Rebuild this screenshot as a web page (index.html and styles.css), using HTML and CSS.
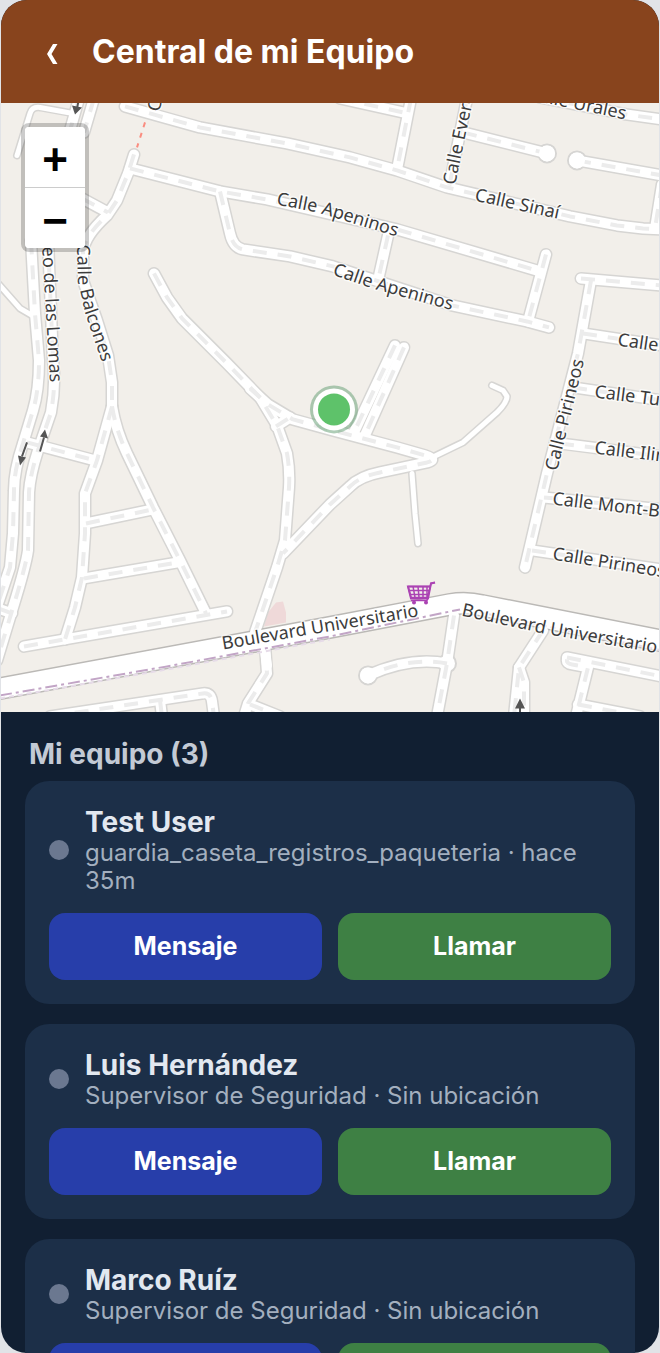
FILE: index.html
```html
<!DOCTYPE html>
<html lang="es">
<head>
  <meta charset="UTF-8" />
  <meta name="viewport" content="width=device-width, initial-scale=1.0" />
  <title>Central de mi Equipo</title>
  <link rel="stylesheet" href="styles.css">
</head>
<body>

  <div class="phone">
    <header class="topbar">
      <button class="back" type="button" aria-label="Volver">
        <svg width="12" height="22" viewBox="0 0 12 22"><path d="M7 1h4.500L5.500 11l6 10H7L1 11z" fill="#fff"/></svg>
      </button>
      <h1>Central de mi Equipo</h1>
    </header>

    <div class="map">
      <svg class="map-canvas" viewBox="1 102 658 610" preserveAspectRatio="xMidYMid slice">
        <defs>
          <!-- calles -->
          <g id="calles">
            <path d="M125 106L157 115 200 127 287 143 350 157 397 170 447 187 570 216 617 225 643 228 662 229"/>
            <path d="M411 98L397 169"/>
            <path d="M340 98L403 112"/>
            <path d="M467 98L449 187"/>
            <path d="M463 132L547 153"/>
            <path d="M577 160L662 175"/>
            <path d="M662 184L655 228"/>
            <path d="M540 97L626 114 662 119"/>
            <path d="M130 168L220 191 267 199 397 229 540 271"/>
            <path d="M220 191L230 233Q233 247 243 249L290 256 333 266 452 305 527 321 549 327"/>
            <path d="M388 235L378 280"/>
            <path d="M546 254L528 321"/>
            <path d="M134 154L128 173 117 200 107 215Q84 236 83 252L83 280 97 320 108 355 112 382V408"/>
            <path d="M82 198L108 212"/>
            <path d="M112 406L97 460 85 493V533L82 577 75 607 65 639"/>
            <path d="M112 406Q116 430 127 453L153 507 180 560 206 613"/>
            <path d="M86 523L153 509"/>
            <path d="M84 578L178 562"/>
            <path d="M24 646L227 611"/>
            <path d="M94 98L84 132"/>
            <path d="M79 98L70 130"/>
            <path d="M31 240L35 313 39 360Q39 390 33 410L23 443Q14 470 14 490L13 533 10 567 -2 603"/>
            <path d="M48 240L53 360Q56 385 51 412L38 450Q30 475 29 492L28 550Q26 565 13 607L-3 660"/>
            <path d="M-2 608L12 613"/>
            <path d="M27 442L95 460"/>
            <path d="M154 273L167 297 182 318 227 363 260 397 277 425 287 453Q290 470 289 487L285 540 277 567 255 632"/>
            <path d="M250 388L268 404 293 419 333 430 397 447 425 455Q438 459 427 462L380 472Q360 476 350 486L330 504 283 553"/>
            <path d="M276 426L290 417"/>
            <path d="M395 345L353 434"/>
            <path d="M404 347L364 437"/>
            <path d="M581 278L662 285"/>
            <path d="M591 280L578 353 547 473 525 567"/>
            <path d="M583 333L662 345"/>
            <path d="M573 387L662 400"/>
            <path d="M560 443L662 456"/>
            <path d="M544 497L662 509"/>
            <path d="M532 550L662 569"/>
            <path d="M265 645L267 673 248 703 244 716"/>
            <path d="M250 704L280 716"/>
            <path d="M50 716L203 693Q211 692 212 701L214 716"/>
            <path d="M160 700L162 716"/>
            <path d="M454 615L447 663 437 716"/>
            <path d="M447 663Q410 656 368 675"/>
            <path d="M543 630L519 667 514 716"/>
            <path d="M519 667L524 682V716"/>
            <path d="M567 657L662 676"/>
            <path d="M567 659Q566 663 572 664L588 667 576 716"/>
            <path d="M578 704L640 716"/>
          </g>
          <g id="servicio">
            <path d="M17 155L30 113Q32 106 40 107L73 113"/>
            <path d="M-2 283L20 308 32 315"/>
            <path d="M432 457L463 442 497 412Q507 402 507 396L503 390 492 385"/>
            <path d="M412 473L415 513 418 543"/>
          </g>
          <g id="glorietas">
            <circle cx="547" cy="153" r="8"/>
            <circle cx="577" cy="160" r="8"/>
            <circle cx="447" cy="663" r="8"/>
            <circle cx="368" cy="675" r="8"/>
          </g>
          <path id="bulevar" d="M-10 690L330 627 450 604Q466 601 482 605L670 642"/>

          <!-- lineas base de los nombres -->
          <path id="n-apeninos1" d="M276 204L317 212 400 237"/>
          <path id="n-apeninos2" d="M332 274L372 288 460 312"/>
          <path id="n-sinai" d="M474 200L570 221"/>
          <path id="n-everest" d="M455 185L480 66"/>
          <path id="n-urales" d="M510 95L625 119"/>
          <path id="n-balcones" d="M77 244L78 280 85 312 108 380"/>
          <path id="n-lomas" d="M38 200L43 260 50 382"/>
          <path id="n-pirineos" d="M557 471L587 348"/>
          <path id="n-calle" d="M617 345L720 360"/>
          <path id="n-tu" d="M594 397L720 413"/>
          <path id="n-ilimani" d="M594 453L720 468"/>
          <path id="n-mont" d="M552 504L720 524"/>
          <path id="n-pirineos2" d="M552 559L720 586"/>
          <path id="n-bulevar1" d="M223 649L305 635 430 614"/>
          <path id="n-bulevar2" d="M461 615L543 633 670 655"/>
        </defs>

        <rect class="land" x="-200" y="-200" width="1100" height="1300"/>
        <path d="M264 626L268 612 276 602 283 601 286 612 286 622z" fill="#efd9d9"/>

        <use href="#servicio" class="casing thin"/>
        <use href="#calles" class="casing"/>
        <use href="#glorietas" class="casing-dot"/>
        <use href="#bulevar" class="casing wide"/>
        <use href="#servicio" class="fill thin"/>
        <use href="#glorietas" class="fill-dot"/>
        <use href="#calles" class="fill"/>
        <use href="#calles" class="dash"/>
        <use href="#bulevar" class="fill wide"/>
        <circle cx="547" cy="153" r="8" fill="#fff"/>
        <circle cx="577" cy="160" r="8" fill="#fff"/>
        <circle cx="368" cy="675" r="8" fill="#fff"/>
        <path class="fill" d="M263 635L267 665"/>
        <path class="limit" d="M0 695L167 666 330 636 460 609"/>
        <path class="limit-soft" d="M0 698L167 669 330 639 M480 612L662 650"/>
        <path class="steps" d="M145 122L137 147"/>

        <g class="arrows">
          <path d="M79 98L77 108M27 442L22 456M40 451L44 437M520 716V706"/>
          <path class="head" d="M72 105L82 107 75 114zM18 455L26 457 20 465zM40 436L48 438 45 429zM515 708L525 708 520 698z"/>
        </g>

        <g class="names">
          <text><textPath href="#n-apeninos1">Calle Apeninos</textPath></text>
          <text><textPath href="#n-apeninos2">Calle Apeninos</textPath></text>
          <text><textPath href="#n-sinai">Calle Sinaí</textPath></text>
          <text><textPath href="#n-everest">Calle Everest</textPath></text>
          <text text-anchor="end"><textPath href="#n-urales" startOffset="100%">Calle Urales</textPath></text>
          <text><textPath href="#n-balcones">Calle Balcones</textPath></text>
          <text text-anchor="end"><textPath href="#n-lomas" startOffset="100%">Paseo de las Lomas</textPath></text>
          <text><textPath href="#n-pirineos">Calle Pirineos</textPath></text>
          <text><textPath href="#n-calle">Calle</textPath></text>
          <text><textPath href="#n-tu">Calle Tu</textPath></text>
          <text><textPath href="#n-ilimani">Calle Ilim</textPath></text>
          <text><textPath href="#n-mont">Calle Mont-B</textPath></text>
          <text><textPath href="#n-pirineos2">Calle Pirineos</textPath></text>
          <text><textPath href="#n-bulevar1">Boulevard Universitario</textPath></text>
          <text><textPath href="#n-bulevar2">Boulevard Universitario</textPath></text>
          <text transform="translate(159 112) rotate(-75)">C</text>
        </g>

        <!-- supermercado -->
        <g fill="none" stroke="#ab43b3" stroke-width="2">
          <path d="M435 582L431 583 427 600H411M408 586H430M408 586L411 597H428M409 590H429M410 594H428M413 586L415 597M418 586L419 597M423 586V597M427 586V597" stroke-width="1.500"/>
          <path d="M435 582L431 583 428 598H411L408 586H430"/>
          <circle cx="414" cy="602" r="1"/>
          <circle cx="426" cy="602" r="1"/>
        </g>

        <!-- posicion del miembro -->
        <circle cx="334" cy="409" r="24" fill="#5f9c70" fill-opacity=".5"/>
        <circle cx="334" cy="409" r="21" fill="#fff"/>
        <circle cx="334" cy="409" r="16" fill="#5ec26a"/>
      </svg>

      <div class="zoom">
        <button type="button" aria-label="Acercar">+</button>
        <button type="button" aria-label="Alejar">−</button>
      </div>
    </div>

    <main class="team">
      <h2>Mi equipo (3)</h2>

      <article class="card">
        <div class="member">
          <span class="dot"></span>
          <div>
            <h3>Test User</h3>
            <p>guardia_caseta_registros_paqueteria · hace 35m</p>
          </div>
        </div>
        <div class="actions">
          <button class="msg" type="button">Mensaje</button>
          <button class="call" type="button">Llamar</button>
        </div>
      </article>

      <article class="card">
        <div class="member">
          <span class="dot"></span>
          <div>
            <h3>Luis Hernández</h3>
            <p>Supervisor de Seguridad · Sin ubicación</p>
          </div>
        </div>
        <div class="actions">
          <button class="msg" type="button">Mensaje</button>
          <button class="call" type="button">Llamar</button>
        </div>
      </article>

      <article class="card">
        <div class="member">
          <span class="dot"></span>
          <div>
            <h3>Marco Ruíz</h3>
            <p>Supervisor de Seguridad · Sin ubicación</p>
          </div>
        </div>
        <div class="actions">
          <button class="msg" type="button">Mensaje</button>
          <button class="call" type="button">Llamar</button>
        </div>
      </article>
    </main>
  </div>

</body>
</html>
```
FILE: styles.css
```css
* {
  box-sizing: border-box;
  margin: 0;
  padding: 0;
}

body {
  background: #e1e3e7;
  font-family: Inter, "Liberation Sans", sans-serif;
  padding: 0 1px;
}

button {
  border: none;
  font-family: inherit;
  cursor: pointer;
}

.phone {
  display: flex;
  flex-direction: column;
  height: 100vh;
  background: #111f32;
  border-radius: 26px;
  overflow: hidden;
}

.topbar {
  display: flex;
  align-items: center;
  gap: 23px;
  padding: 32px 34px 31px;
  background: #88441d;
  color: #fff;
}

.topbar h1 {
  font-size: 32px;
  line-height: 40px;
  font-weight: 700;
}

.back {
  display: flex;
  align-items: center;
  justify-content: center;
  width: 34px;
  height: 40px;
  padding-top: 4px;
  background: none;
}

.map {
  position: relative;
  flex: 0 0 45vh;
  overflow: hidden;
}

.map-canvas {
  display: block;
  width: 100%;
  height: 100%;
}

.land { fill: #f2efea; }

.casing, .fill, .dash {
  fill: none;
  stroke-linecap: round;
  stroke-linejoin: round;
}

.casing { stroke: #d6d5d3; stroke-width: 13px; }
.fill { stroke: #fff; stroke-width: 10px; }
.dash {
  stroke: #ececec;
  stroke-width: 4px;
  stroke-dasharray: 14 11;
  stroke-linecap: butt;
}

.casing.thin { stroke-width: 8px; }
.fill.thin { stroke-width: 5px; }
.casing.wide { stroke: #bbb9b6; stroke-width: 23px; }
.fill.wide { stroke-width: 20px; }

.casing-dot { fill: #fff; stroke: #d6d5d3; stroke-width: 4px; }
.fill-dot { fill: #fff; }

.limit, .limit-soft, .steps { fill: none; stroke-width: 2px; }
.limit { stroke: #c2a5c6; stroke-dasharray: 12 4 3 4; }
.limit-soft { stroke: #e6dbe8; stroke-dasharray: 5 4; }
.steps { stroke: #fa8d80; stroke-dasharray: 5 6; }

.arrows { fill: none; stroke: #555; stroke-width: 2px; }
.arrows .head { fill: #555; stroke: none; }

.names {
  font-family: "Noto Sans", sans-serif;
  font-size: 18px;
  fill: #3c3c3c;
  stroke: rgba(255, 255, 255, 0.7);
  stroke-width: 3px;
  stroke-linejoin: round;
  paint-order: stroke;
}

.zoom {
  position: absolute;
  top: 20px;
  left: 20px;
  display: flex;
  flex-direction: column;
  border: 4px solid rgba(0, 0, 0, 0.2);
  border-radius: 8px;
  background-clip: padding-box;
}

.zoom button {
  width: 60px;
  height: 60px;
  padding-top: 6px;
  background: #fff;
  color: #000;
  font-family: "Liberation Sans", sans-serif;
  font-size: 44px;
  line-height: 54px;
  font-weight: 700;
}

.zoom button:first-child {
  height: 61px;
  border-bottom: 1px solid #ccc;
  border-radius: 4px 4px 0 0;
}

.zoom button:last-child {
  border-radius: 0 0 4px 4px;
}

.team {
  flex: 1;
  min-height: 0;
  display: flex;
  flex-direction: column;
  gap: 20px;
  padding: 24px 24px 0;
  overflow-y: auto;
  scrollbar-width: none;
}

.team h2 {
  margin-bottom: -11px;
  padding-left: 4px;
  color: #c3cad5;
  font-size: 28px;
  line-height: 36px;
  font-weight: 700;
}

.card {
  flex: none;
  display: flex;
  flex-direction: column;
  gap: 18px;
  padding: 24px;
  background: #1c2f48;
  border-radius: 24px;
}

.member {
  display: flex;
  align-items: center;
  gap: 16px;
}

.dot {
  flex: none;
  width: 20px;
  height: 20px;
  border-radius: 50%;
  background: #6b7890;
}

.member h3 {
  color: #e2e8f0;
  font-size: 28px;
  line-height: 34px;
  font-weight: 700;
}

.member p {
  color: #a3afbf;
  font-size: 24px;
  line-height: 28px;
}

.actions {
  display: flex;
  gap: 16px;
}

.actions button {
  flex: 1;
  height: 67px;
  border-radius: 16px;
  color: #fff;
  font-size: 25px;
  font-weight: 700;
}

.msg { background: #273eaa; }
.call { background: #3e8044; }
```
